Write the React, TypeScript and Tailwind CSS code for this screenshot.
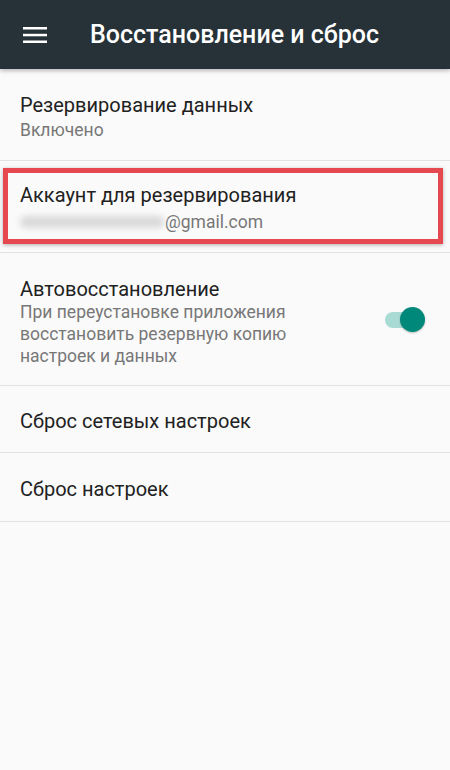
import React from 'react'

const font = { fontFamily: 'Roboto, "Noto Sans", sans-serif' }

function Hamburger() {
  return (
    <svg width="24" height="16" viewBox="0 0 24 16" className="shrink-0">
      <rect x="0" y="0" width="24" height="2.5" fill="#ffffff" />
      <rect x="0" y="6.8" width="24" height="2.5" fill="#ffffff" />
      <rect x="0" y="13.5" width="24" height="2.5" fill="#ffffff" />
    </svg>
  )
}

function Toggle() {
  return (
    <div className="relative w-[42px] h-[26px] shrink-0">
      <div className="absolute left-[1px] top-[5px] w-[32px] h-[16px] rounded-full bg-[#a9dbd5]" />
      <div className="absolute left-[16px] top-0 w-[25px] h-[25px] rounded-full bg-[#00897b] shadow-[0_1px_2px_rgba(0,0,0,0.25)]" />
    </div>
  )
}

export default function App() {
  return (
    <div className="w-[450px] h-[770px] bg-[#fafafa] overflow-hidden" style={font}>
      {/* Toolbar */}
      <div className="relative z-10 h-[69px] bg-[#263238] flex items-center pl-[23px] shadow-[0_2px_4px_rgba(0,0,0,0.25)]">
        <Hamburger />
        <h1 className="ml-[43px] text-white text-[25px] font-medium leading-none">Восстановление и сброс</h1>
      </div>

      {/* Резервирование данных */}
      <div className="px-5 pt-[24px] pb-[20px] border-b border-[#e2e2e2]">
        <div className="text-[20px] leading-[24px] text-[#212121]">Резервирование данных</div>
        <div className="mt-[3px] text-[17.5px] leading-[20px] text-[#777777]">Включено</div>
      </div>

      {/* Аккаунт */}
      <div className="relative px-5 pt-[22px] pb-[20px] border-b border-[#e2e2e2]">
        <div className="text-[20px] leading-[24px] text-[#212121]">Аккаунт для резервирования</div>
        <div className="mt-[5px] flex items-center text-[17.5px] leading-[20px] text-[#777777]">
          <span className="w-[144px] h-[12px] rounded-full bg-[#d9d9d9] blur-[3px]" />
          <span className="ml-[1px]">@gmail.com</span>
        </div>
        <div className="absolute left-[3px] top-[7px] w-[440px] h-[76px] border-[5px] border-[#e5484f] shadow-[0_1px_4px_rgba(0,0,0,0.3)] pointer-events-none" />
      </div>

      {/* Автовосстановление */}
      <div className="flex items-center px-5 pt-[24px] pb-[18px] border-b border-[#e2e2e2]">
        <div className="flex-1">
          <div className="text-[20px] leading-[24px] text-[#212121]">Автовосстановление</div>
          <div className="text-[17.5px] leading-[22px] text-[#777777]">
            При переустановке приложения
            <br />
            восстановить резервную копию
            <br />
            настроек и данных
          </div>
        </div>
        <div className="mr-[4px] mb-[4px]">
          <Toggle />
        </div>
      </div>

      {/* Сброс сетевых настроек */}
      <div className="px-5 pt-[23px] pb-[19px] border-b border-[#e2e2e2]">
        <div className="text-[20px] leading-[24px] text-[#212121]">Сброс сетевых настроек</div>
      </div>

      {/* Сброс настроек */}
      <div className="px-5 pt-[24px] pb-[20px] border-b border-[#e2e2e2]">
        <div className="text-[20px] leading-[24px] text-[#212121]">Сброс настроек</div>
      </div>
    </div>
  )
}
